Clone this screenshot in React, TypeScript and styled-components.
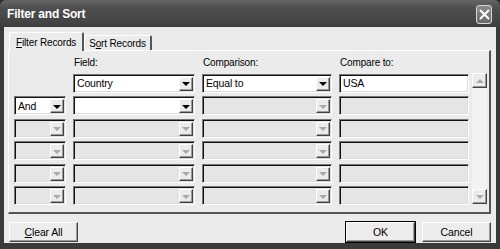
import React from 'react';
import styled, { createGlobalStyle } from 'styled-components';

const GlobalStyle = createGlobalStyle`
	body {
		margin: 0;
		background: #2c2c2c;
	}
	* {
		box-sizing: border-box;
	}
`;

const uiFont = `"Liberation Sans", Arial, sans-serif`;

const Window = styled.div`
	width: 500px;
	height: 249px;
	display: flex;
	flex-direction: column;
	background: #3a3a3a;
	border-radius: 6px 6px 0 0;
	overflow: hidden;
	font-family: ${uiFont};
	font-size: 10px;
	letter-spacing: -0.15px;
	color: #000;
`;

const TitleBar = styled.div`
	height: 27px;
	flex: none;
	display: flex;
	align-items: center;
	justify-content: space-between;
	padding: 0 8px 0 7px;
	background: linear-gradient(#666, #4e4e4e 30%, #454545 80%, #3c3c3c);
`;

const Title = styled.span`
	color: #fff;
	font-weight: bold;
	font-size: 12px;
	letter-spacing: -0.2px;
	margin-top: 1px;
`;

const CloseButton = styled.div`
	width: 16px;
	height: 19px;
	margin-top: 1px;
	border: 1px solid #d8d8d8;
	border-radius: 3px;
	background: linear-gradient(#8a8a8a, #6a6a6a);
	display: flex;
	align-items: center;
	justify-content: center;
`;

const Body = styled.div`
	flex: 1;
	margin: 0 4px 6px 4px;
	background: #ebebeb;
	display: flex;
	flex-direction: column;
	padding: 5px 5px 0 4px;
`;

const TabRow = styled.div`
	display: flex;
	align-items: flex-end;
	padding-left: 1px;
	height: 18px;
	position: relative;
	z-index: 1;
`;

const Tab = styled.div<{ $active?: boolean }>`
	height: ${(p) => (p.$active ? '19px' : '15px')};
	margin-bottom: ${(p) => (p.$active ? '-1px' : '0')};
	padding: ${(p) => (p.$active ? '1px 6px 0 6px' : '1px 4px 0 4px')};
	background: #ebebeb;
	border-top: 1px solid #fff;
	border-left: 1px solid #fff;
	border-right: 2px solid #555;
	border-radius: 2px 2px 0 0;
	display: flex;
	align-items: center;
	white-space: nowrap;
`;

const Panel = styled.div`
	height: 164px;
	border-top: 1px solid #fff;
	border-left: 1px solid #fff;
	border-right: 2px solid #555;
	border-bottom: 2px solid #555;
	padding: 5px 0 0 5px;
	display: flex;
	gap: 3px;
`;

const Grid = styled.div`
	display: grid;
	grid-template-columns: 52px 122px 130px 130px;
	grid-template-rows: 14px;
	grid-auto-rows: 19px;
	column-gap: 7px;
	row-gap: 3.5px;
	align-content: start;
`;

const HeaderCell = styled.div`
	height: 14px;
	padding-left: 1px;
	line-height: 14px;
`;

const Box = styled.div<{ $enabled?: boolean }>`
	position: relative;
	height: 19px;
	background: ${(p) => (p.$enabled ? '#fff' : '#e5e5e5')};
	border-top: 1px solid #777;
	border-left: 1px solid #777;
	border-right: 1px solid #fff;
	border-bottom: 1px solid #fff;
	box-shadow: inset 1px 1px 0 #111, inset -1px -1px 0 #dcdcdc;
	padding: 0 3px;
	display: flex;
	align-items: center;
	white-space: nowrap;
	font-size: 10.5px;
`;

const DropButton = styled.div`
	position: absolute;
	right: 1px;
	top: 2px;
	width: 14px;
	height: 14px;
	background: #ececec;
	border-top: 1px solid #fff;
	border-left: 1px solid #fff;
	border-right: 1px solid #444;
	border-bottom: 1px solid #444;
	box-shadow: inset -1px -1px 0 #999;
	display: flex;
	align-items: center;
	justify-content: center;
`;

const Arrow = styled.div<{ $enabled?: boolean }>`
	width: 0;
	height: 0;
	border-left: 4px solid transparent;
	border-right: 4px solid transparent;
	border-top: 4px solid ${(p) => (p.$enabled ? '#000' : '#a8a8a8')};
	margin-top: 1px;
`;

const ScrollBar = styled.div`
	width: 15px;
	margin-top: 17px;
	height: 131px;
	background: #f2f2f2;
	display: flex;
	flex-direction: column;
	justify-content: space-between;
`;

const ScrollButton = styled.div`
	width: 15px;
	height: 15px;
	background: #ececec;
	border-top: 1px solid #fff;
	border-left: 1px solid #fff;
	border-right: 1px solid #444;
	border-bottom: 1px solid #444;
	box-shadow: inset -1px -1px 0 #999;
	display: flex;
	align-items: center;
	justify-content: center;
`;

const ScrollArrow = styled.div<{ $up?: boolean }>`
	width: 0;
	height: 0;
	border-left: 4px solid transparent;
	border-right: 4px solid transparent;
	${(p) => (p.$up ? 'border-bottom' : 'border-top')}: 4px solid #a8a8a8;
`;

const ButtonRow = styled.div`
	display: flex;
	align-items: center;
	padding: 8px 0 0 1px;
	gap: 7px;
`;

const Button = styled.div<{ $default?: boolean }>`
	width: 69px;
	height: 20px;
	background: #ececec;
	border-top: 1px solid #fff;
	border-left: 1px solid #fff;
	border-right: 1px solid #444;
	border-bottom: 1px solid #444;
	box-shadow: ${(p) =>
		p.$default ? '0 0 0 1px #000, inset -1px -1px 0 #999' : 'inset -1px -1px 0 #999'};
	display: flex;
	align-items: center;
	justify-content: center;
	font-size: 10.5px;
`;

const Spacer = styled.div`
	flex: 1;
`;

type Row = { op: string; field: string; comparison: string; value: string; opOn: boolean; fieldOn: boolean; cmpOn: boolean; valOn: boolean };

const blank: Row = { op: '', field: '', comparison: '', value: '', opOn: false, fieldOn: false, cmpOn: false, valOn: false };

const rows: Row[] = [
	{ op: '', field: 'Country', comparison: 'Equal to', value: 'USA', opOn: false, fieldOn: true, cmpOn: true, valOn: true },
	{ op: 'And', field: '', comparison: '', value: '', opOn: true, fieldOn: true, cmpOn: false, valOn: false },
	blank,
	blank,
	blank,
	blank,
];

const Combo = ({ text, enabled }: { text: string; enabled: boolean }) => (
	<Box $enabled={enabled}>
		{text}
		<DropButton>
			<Arrow $enabled={enabled} />
		</DropButton>
	</Box>
);

const App: React.FC = () => {
	return (
		<>
			<GlobalStyle />
			<Window>
				<TitleBar>
					<Title>Filter and Sort</Title>
					<CloseButton>
						<svg width='11' height='11' viewBox='0 0 11 11'>
							<path d='M1.5 1.5 L9.5 9.5 M9.5 1.5 L1.5 9.5' stroke='#fff' strokeWidth='2' strokeLinecap='round' />
						</svg>
					</CloseButton>
				</TitleBar>
				<Body>
					<TabRow>
						<Tab $active>
							<span><u>F</u>ilter Records</span>
						</Tab>
						<Tab>
							<span>S<u>o</u>rt Records</span>
						</Tab>
					</TabRow>
					<Panel>
						<Grid>
							<HeaderCell />
							<HeaderCell>Field:</HeaderCell>
							<HeaderCell>Comparison:</HeaderCell>
							<HeaderCell>Compare to:</HeaderCell>
							{rows.map((row, i) => (
								<React.Fragment key={i}>
									{i === 0 ? <div /> : <Combo text={row.op} enabled={row.opOn} />}
									<Combo text={row.field} enabled={row.fieldOn} />
									<Combo text={row.comparison} enabled={row.cmpOn} />
									<Box $enabled={row.valOn}>{row.value}</Box>
								</React.Fragment>
							))}
						</Grid>
						<ScrollBar>
							<ScrollButton>
								<ScrollArrow $up />
							</ScrollButton>
							<ScrollButton>
								<ScrollArrow />
							</ScrollButton>
						</ScrollBar>
					</Panel>
					<ButtonRow>
						<Button>
							<span><u>C</u>lear All</span>
						</Button>
						<Spacer />
						<Button $default>OK</Button>
						<Button>Cancel</Button>
					</ButtonRow>
				</Body>
			</Window>
		</>
	);
};

export default App;
